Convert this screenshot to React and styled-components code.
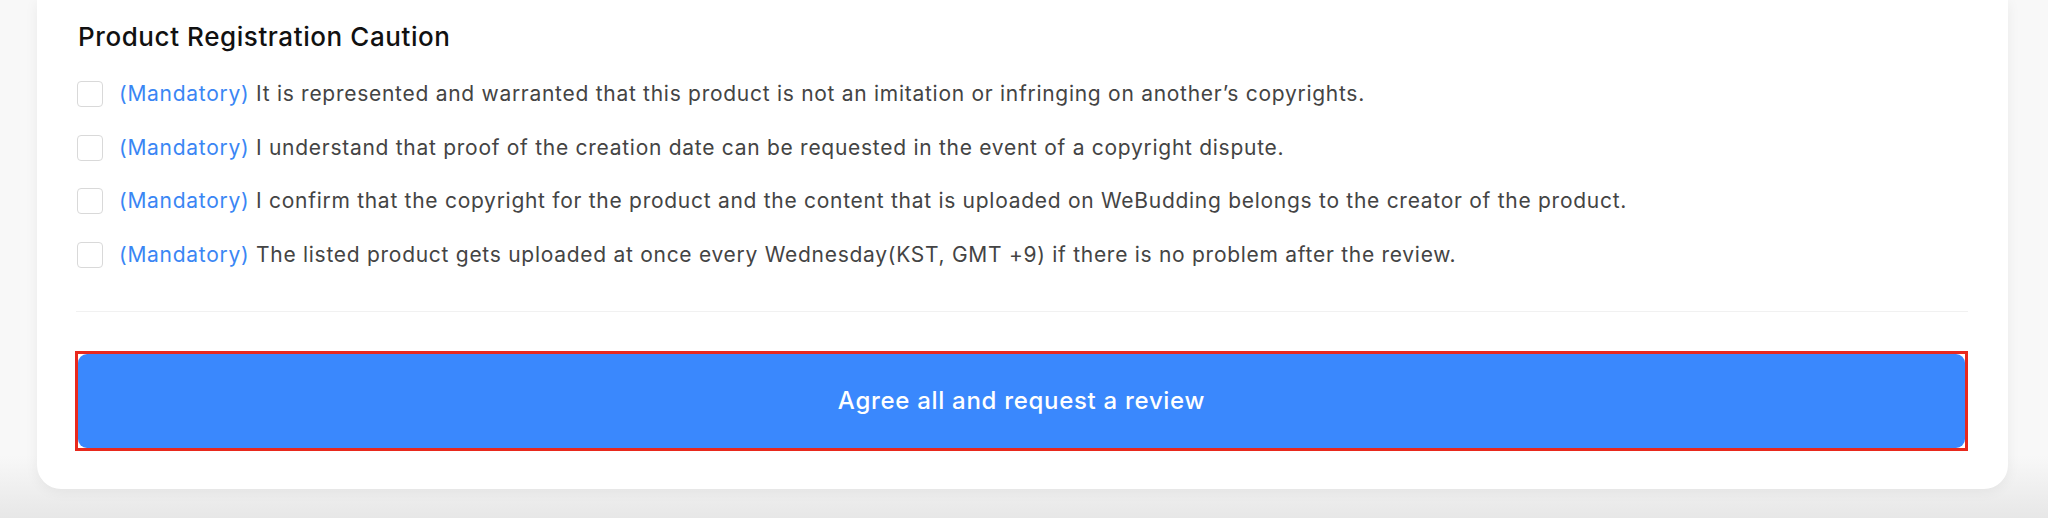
import React, { useState } from "react";
import styled, { createGlobalStyle } from "styled-components";

const GlobalStyle = createGlobalStyle`
  html, body {
    margin: 0;
    padding: 0;
  }
  body {
    height: 518px;
    overflow: hidden;
    font-family: Inter, "Noto Sans", sans-serif;
    background: linear-gradient(to bottom, #f8f8f8 0%, #f8f8f8 88%, #e7e7e7 100%);
  }
`;

const Page = styled.div`
  padding: 0 40px 0 37px;
`;

const Card = styled.section`
  background: #fff;
  border-radius: 0 0 24px 24px;
  box-shadow: 0 2px 14px rgba(0, 0, 0, 0.06);
  padding: 22px 40px 38px 39px;
`;

const Title = styled.h2`
  margin: 0 0 30px 2px;
  font-size: 26px;
  font-weight: 500;
  line-height: 29px;
  letter-spacing: 0.58px;
  color: #111;
`;

const List = styled.div`
  display: flex;
  flex-direction: column;
  gap: 27.5px;
  padding-left: 1px;
`;

const Row = styled.label`
  display: flex;
  align-items: center;
  gap: 16px;
  height: 26px;
  cursor: pointer;
`;

const Box = styled.span`
  flex: none;
  width: 24px;
  height: 24px;
  border: 1px solid #d9d9d9;
  border-radius: 4px;
  background: ${(p) => (p.$checked ? "#3a88fd" : "#fff")};
`;

const Text = styled.span`
  font-size: 21px;
  line-height: 26px;
  letter-spacing: 0.72px;
  color: #444;
  white-space: nowrap;
`;

const Tag = styled.span`
  color: #3a86f4;
`;

const Divider = styled.hr`
  border: 0;
  border-top: 1px solid #f1f1f1;
  margin: 43px 0 39px;
`;

const Highlight = styled.div`
  border: 3px solid #e8291d;
  margin-left: -1px;
`;

const Button = styled.button`
  display: block;
  width: 100%;
  height: 94px;
  border: 0;
  border-radius: 9px;
  background: #3a88fd;
  color: #fff;
  font-family: Inter, "Noto Sans", sans-serif;
  font-size: 24px;
  font-weight: 500;
  letter-spacing: 0.7px;
  cursor: pointer;
`;

const items = [
  "It is represented and warranted that this product is not an imitation or infringing on another\u2019s copyrights.",
  "I understand that proof of the creation date can be requested in the event of a copyright dispute.",
  "I confirm that the copyright for the product and the content that is uploaded on WeBudding belongs to the creator of the product.",
  "The listed product gets uploaded at once every Wednesday(KST, GMT +9) if there is no problem after the review.",
];

export default function App() {
  const [checked, setChecked] = useState(items.map(() => false));

  const toggle = (i) =>
    setChecked((c) => c.map((v, j) => (j === i ? !v : v)));

  return (
    <Page>
      <GlobalStyle />
      <Card>
        <Title>Product Registration Caution</Title>
        <List>
          {items.map((text, i) => (
            <Row key={i} onClick={() => toggle(i)}>
              <Box $checked={checked[i]} />
              <Text>
                <Tag>(Mandatory)</Tag> {text}
              </Text>
            </Row>
          ))}
        </List>
        <Divider />
        <Highlight>
          <Button onClick={() => setChecked(items.map(() => true))}>
            Agree all and request a review
          </Button>
        </Highlight>
      </Card>
    </Page>
  );
}
